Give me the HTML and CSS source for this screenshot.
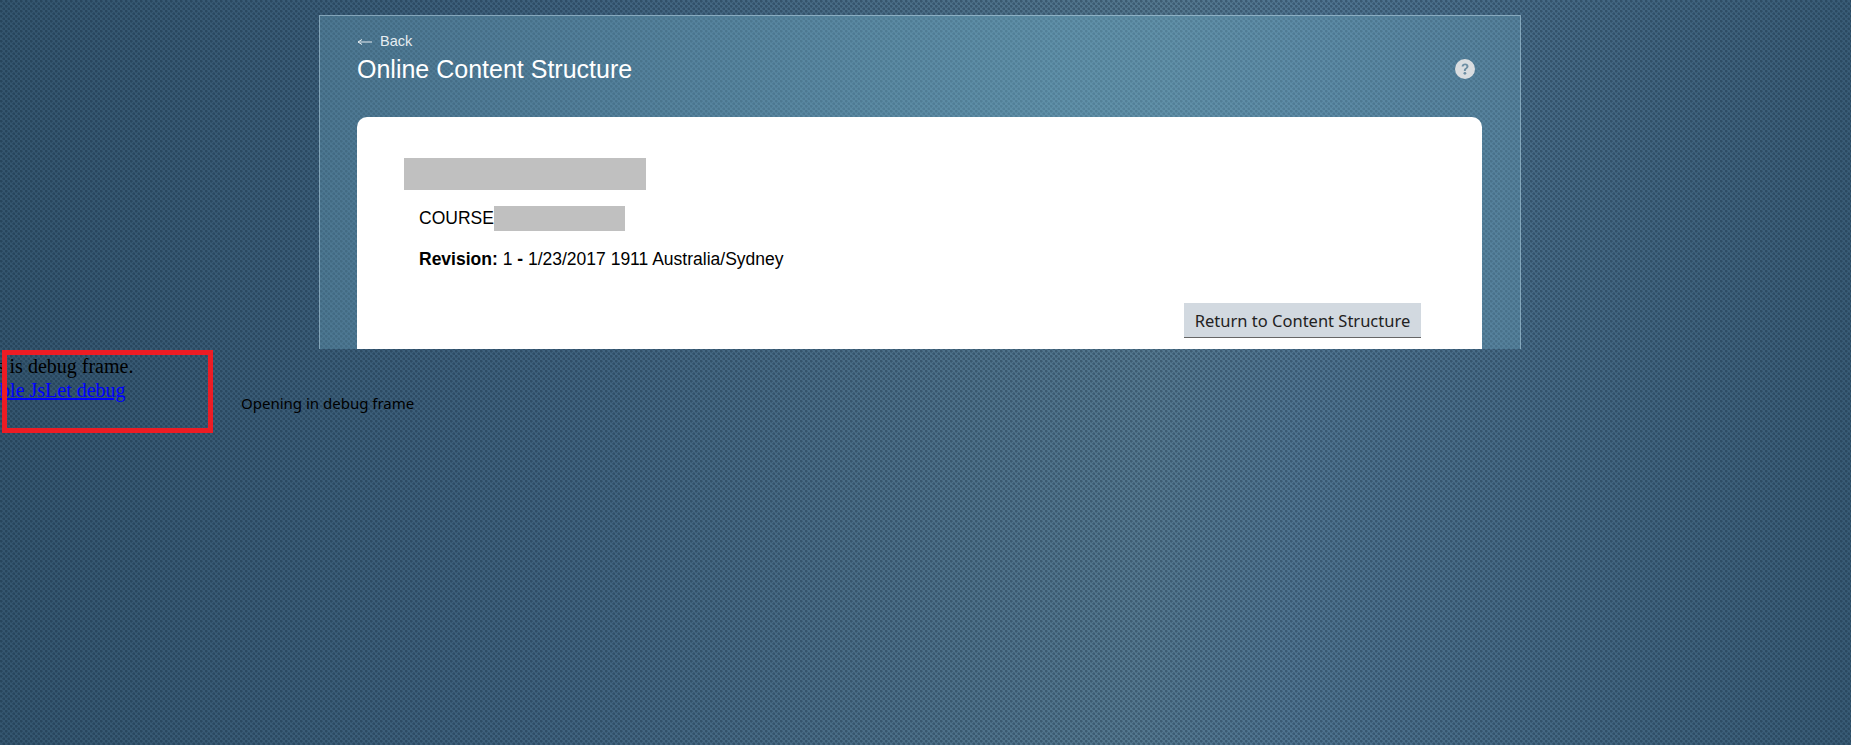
FILE: index.html
```html
<!DOCTYPE html>
<html lang="en">
<head>
<meta charset="utf-8">
<title>Online Content Structure</title>
<link rel="stylesheet" href="styles.css">
</head>
<body>
<main class="top-frame">
  <section class="panel">
    <a class="back" href="#">
      <svg class="back-arrow" width="15" height="9" viewBox="0 0 15 9" aria-hidden="true">
        <path d="M15 5H1M1 5l4-2.500M1 5l4 2.500" fill="none" stroke="#e6edf1" stroke-width="1"/>
      </svg>
      Back
    </a>
    <header class="panel-head">
      <h1 class="title">Online Content Structure</h1>
      <svg class="help" width="20" height="20" viewBox="0 0 20 20" aria-label="Help">
        <circle cx="10" cy="10" r="10" fill="#d9dde0"/>
        <path d="M6.600 7.600c.1-2 1.500-3.100 3.500-3.100 2 0 3.400 1.100 3.400 2.800 0 1.300-.7 2-1.600 2.600-.8.500-1.100.9-1.100 1.700v.3H8.900v-.5c0-1.200.5-1.900 1.400-2.500.8-.5 1.100-.9 1.100-1.500 0-.7-.5-1.100-1.300-1.100-.9 0-1.400.5-1.500 1.300z" fill="#6d8ea3"/>
        <circle cx="9.900" cy="14.300" r="1.400" fill="#6d8ea3"/>
      </svg>
    </header>
    <div class="card">
      <div class="redact redact-title"></div>
      <div class="course-row"><span class="course-label">COURSE</span><span class="redact redact-code"></span></div>
      <p class="revision"><b>Revision:</b> 1 <b>-</b> 1/23/2017 1911 Australia/Sydney</p>
      <div class="actions"><button class="return-btn" type="button">Return to Content Structure</button></div>
    </div>
  </section>
</main>
<section class="debug-frame">
  <div class="debug-text">
    <div>This is debug frame.</div>
    <a href="#">Enable JsLet debug</a>
  </div>
  <div class="red-box"></div>
  <span class="debug-note">Opening in debug frame</span>
</section>
</body>
</html>
```

FILE: styles.css
```css
* { box-sizing: border-box; }
html, body { height: 100%; }
body {
  margin: 0;
  overflow: hidden;
  background-color: #3d5f7b;
  background-image:
    radial-gradient(circle at 1.25px 1.25px, rgba(10,30,50,.3) 1.1px, transparent 1.6px),
    radial-gradient(circle at 3.75px 3.75px, rgba(10,30,50,.3) 1.1px, transparent 1.6px),
    linear-gradient(93deg, #34566f 0%, #3f627e 30%, #54788f 62%, #4f7490 70%, #385b75 100%);
  background-size: 5px 5px, 5px 5px, 100% 100%;
}
.top-frame {
  height: 349px;
  padding: 15px 0 0 319px;
  overflow: hidden;
}
.panel {
  width: 1202px;
  height: 400px;
  padding: 16px 38px 0 37px;
  border: 1px solid rgba(190,215,230,.5);
  background-image: linear-gradient(90deg, rgba(115,175,200,.32) 0%, rgba(115,180,205,.44) 62%, rgba(115,175,200,.32) 100%);
}
.back {
  display: flex;
  align-items: center;
  height: 17px;
  font: 14.5px "Liberation Sans", Arial, sans-serif;
  color: #e6edf1;
  text-decoration: none;
}
.back-arrow { margin: 2px 8px 0 0; }
.panel-head {
  display: flex;
  justify-content: space-between;
  align-items: center;
  height: 32px;
  padding-right: 7px;
  margin-top: 4px;
}
.title {
  margin: 0;
  font: 400 25px/32px "Liberation Sans", Arial, sans-serif;
  color: #fff;
}
.card {
  margin-top: 32px;
  height: 300px;
  padding: 41px 61px 0 47px;
  background: #fff;
  border-radius: 10px 10px 0 0;
  font: 17.5px/20px "Liberation Sans", Arial, sans-serif;
  color: #000;
}
.redact { display: block; background: #c0c0c0; }
.redact-title { width: 242px; height: 32px; }
.course-row {
  display: flex;
  align-items: center;
  height: 25px;
  margin: 16px 0 0 15px;
}
.course-label { margin-bottom: 2px; }
.redact-code { width: 131px; height: 25px; }
.revision { margin: 18px 0 0 15px; height: 20px; }
.actions { display: flex; justify-content: flex-end; margin-top: 34px; }
.return-btn {
  width: 237px;
  height: 35px;
  padding: 0;
  border: 0;
  border-bottom: 1px solid #666;
  background: #d2d9e0;
  color: #222;
  font: 16.5px "Noto Sans", sans-serif;
}
.debug-frame {
  position: relative;
  height: 396px;
  overflow: hidden;
  font: 20px/24px "Liberation Serif", "Times New Roman", serif;
  color: #000;
}
.debug-text {
  margin-left: -31px;
  padding-top: 5px;
}
.debug-text a { color: #00f; }
.red-box {
  position: absolute;
  left: 2px;
  top: 1px;
  width: 211px;
  height: 83px;
  border: 5px solid #ed1c24;
}
.debug-note {
  position: absolute;
  left: 241px;
  top: 44px;
  font: 15px/20px "Noto Sans", sans-serif;
  color: #000;
}
```
